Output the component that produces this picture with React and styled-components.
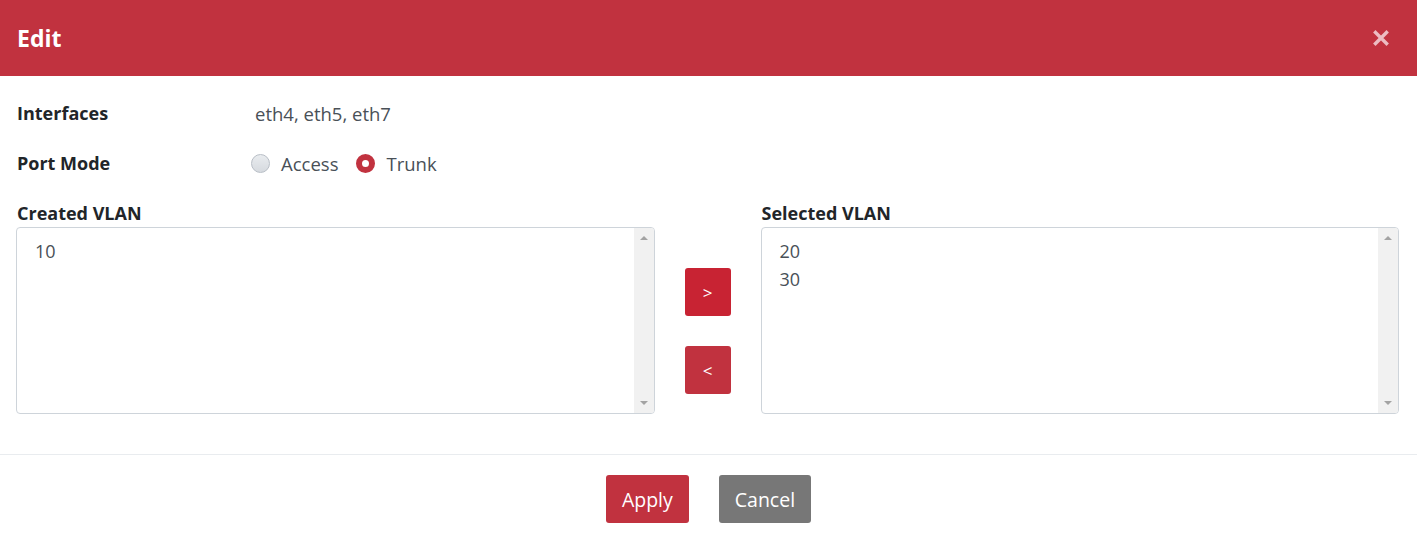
import React, { useState } from 'react';
import styled, { createGlobalStyle } from 'styled-components';

const GlobalStyle = createGlobalStyle`
  html, body {
    margin: 0;
    padding: 0;
    background: #fff;
  }
  body {
    font-family: "Open Sans", "Liberation Sans", sans-serif;
    color: #212529;
  }
`;

const created = ['10'];
const selected = ['20', '30'];

export default function App() {
    const [mode, setMode] = useState('trunk');

    return (
        <Dialog>
            <GlobalStyle/>
            <Header>
                <Title>Edit</Title>
                <CloseButton aria-label="Close">
                    <svg width="16" height="16" viewBox="0 0 16 16">
                        <path d="M2.5 2.5 L13.5 13.5 M13.5 2.5 L2.5 13.5" stroke="currentColor" strokeWidth="3.4" strokeLinecap="square"/>
                    </svg>
                </CloseButton>
            </Header>
            <Body>
                <FieldRow>
                    <Label>Interfaces</Label>
                    <Value>eth4, eth5, eth7</Value>
                </FieldRow>
                <FieldRow>
                    <Label>Port Mode</Label>
                    <RadioGroup>
                        <RadioOption onClick={() => setMode('access')}>
                            <RadioDot checked={mode === 'access'}/>
                            <span>Access</span>
                        </RadioOption>
                        <RadioOption onClick={() => setMode('trunk')}>
                            <RadioDot checked={mode === 'trunk'}/>
                            <span>Trunk</span>
                        </RadioOption>
                    </RadioGroup>
                </FieldRow>
                <VlanGrid>
                    <ListColumn>
                        <ListLabel>Created VLAN</ListLabel>
                        <ListBox>
                            <ListItems>
                                {created.map(v => <ListItem key={v}>{v}</ListItem>)}
                            </ListItems>
                            <Scrollbar>
                                <Arrow up/>
                                <Arrow/>
                            </Scrollbar>
                        </ListBox>
                    </ListColumn>
                    <MoveButtons>
                        <MoveButton active>&gt;</MoveButton>
                        <MoveButton>&lt;</MoveButton>
                    </MoveButtons>
                    <ListColumn>
                        <ListLabel>Selected VLAN</ListLabel>
                        <ListBox>
                            <ListItems>
                                {selected.map(v => <ListItem key={v}>{v}</ListItem>)}
                            </ListItems>
                            <Scrollbar>
                                <Arrow up/>
                                <Arrow/>
                            </Scrollbar>
                        </ListBox>
                    </ListColumn>
                </VlanGrid>
            </Body>
            <Footer>
                <FooterButton>Apply</FooterButton>
                <FooterButton secondary>Cancel</FooterButton>
            </Footer>
        </Dialog>
    );
}

const Dialog = styled.div`
  width: 1417px;
  background: #fff;
`;

const Header = styled.div`
  height: 76px;
  background-color: #c1323f;
  display: flex;
  align-items: center;
  justify-content: space-between;
  padding: 0 28px 0 17px;
  box-sizing: border-box;
`;

const Title = styled.h5`
  margin: 0;
  color: #fff;
  font-size: 23px;
  font-weight: 700;
  line-height: 1;
`;

const CloseButton = styled.button`
  border: 0;
  background: none;
  padding: 0;
  color: #edbcc2;
  display: flex;
  cursor: pointer;
`;

const Body = styled.div`
  padding: 25px 18px 40px 16px;
`;

const FieldRow = styled.div`
  display: flex;
  align-items: center;
  height: 24px;
  margin-bottom: 26px;
`;

const Label = styled.div`
  width: 234px;
  padding-left: 1px;
  font-size: 18px;
  font-weight: 700;
  color: #212529;
`;

const Value = styled.div`
  font-size: 18.5px;
  color: #495057;
  padding-left: 4px;
`;

const RadioGroup = styled.div`
  display: flex;
  align-items: center;
  gap: 18px;
`;

const RadioOption = styled.label`
  display: flex;
  align-items: center;
  gap: 11px;
  font-size: 18.5px;
  color: #495057;
  cursor: pointer;
`;

const RadioDot = styled.span`
  width: 19px;
  height: 19px;
  border-radius: 50%;
  box-sizing: border-box;
  border: ${props => props.checked ? '6px solid #c1323f' : '1px solid #b8bec6'};
  background: ${props => props.checked ? '#fff' : 'linear-gradient(#e9ecef, #d6dadf)'};
`;

const VlanGrid = styled.div`
  display: grid;
  grid-template-columns: 1fr 106px 1fr;
`;

const ListColumn = styled.div`
  display: flex;
  flex-direction: column;
`;

const ListLabel = styled.div`
  font-size: 18px;
  font-weight: 700;
  line-height: 24px;
  padding-left: 1px;
  margin-bottom: 2px;
`;

const ListBox = styled.div`
  height: 187px;
  box-sizing: border-box;
  border: 1px solid #ced4da;
  border-radius: 4px;
  display: flex;
  overflow: hidden;
`;

const ListItems = styled.div`
  flex: 1;
  padding: 9px 18px;
`;

const ListItem = styled.div`
  font-size: 18px;
  line-height: 28px;
  color: #495057;
`;

const Scrollbar = styled.div`
  width: 20px;
  background: #f1f1f1;
  display: flex;
  flex-direction: column;
  justify-content: space-between;
  align-items: center;
  padding: 8px 0 8px;
`;

const Arrow = styled.span`
  width: 0;
  height: 0;
  border-left: 4px solid transparent;
  border-right: 4px solid transparent;
  border-bottom: ${props => props.up ? '4px solid #a3a3a3' : '0'};
  border-top: ${props => props.up ? '0' : '4px solid #a3a3a3'};
`;

const MoveButtons = styled.div`
  display: flex;
  flex-direction: column;
  align-items: center;
  gap: 30px;
  padding-top: 67px;
`;

const MoveButton = styled.button`
  width: 46px;
  height: 48px;
  border: 0;
  border-radius: 3px;
  background-color: ${props => props.active ? '#c82333' : '#c1323f'};
  color: #fff;
  font-family: "Open Sans", "Liberation Sans", sans-serif;
  font-size: 17px;
  padding: 0;
  cursor: pointer;
`;

const Footer = styled.div`
  border-top: 1px solid #e9ecef;
  display: flex;
  justify-content: center;
  gap: 30px;
  padding: 20px 0 19px;
`;

const FooterButton = styled.button`
  height: 48px;
  padding: 0 16px;
  border: 0;
  border-radius: 3px;
  background-color: ${props => props.secondary ? '#777777' : '#c1323f'};
  color: #fff;
  font-family: "Open Sans", "Liberation Sans", sans-serif;
  font-size: 19.5px;
  cursor: pointer;
`;
